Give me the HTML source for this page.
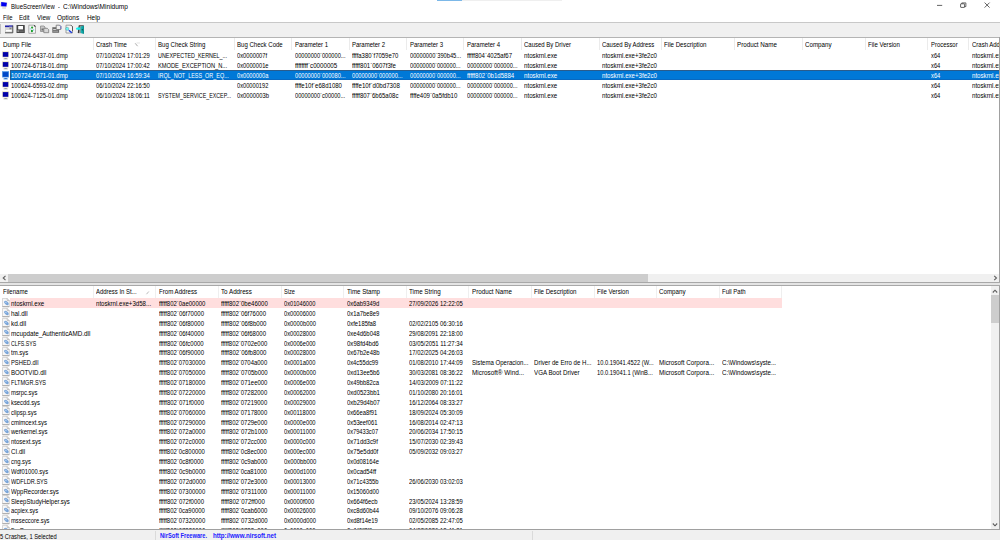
<!DOCTYPE html><html><head><meta charset="utf-8"><style>
*{margin:0;padding:0;box-sizing:border-box}
html,body{width:1000px;height:540px;overflow:hidden;background:#fff;font-family:"Liberation Sans", sans-serif;font-size:6.8px;color:#000}
.a{position:absolute;white-space:nowrap}
.t{position:absolute;white-space:nowrap}
.clip{position:absolute;overflow:hidden}
</style></head><body>
<div class="a" style="left:437px;top:0;width:125px;height:1px;background:#efefef"></div>
<div class="a" style="left:437px;top:0;width:25px;height:1px;background:#7cb8e8"></div>
<svg class="a" style="left:0;top:0" width="10" height="10" viewBox="0 0 10 10"><path d="M0.6 1.5L7.5 2.3L7.1 7.2L0.6 6.9Z" fill="#f2efe0"/><path d="M1.2 2L6.9 2.8L6.4 6.6L1.2 6.3Z" fill="#0000f0"/><path d="M0.3 3.5V6.5" stroke="#c0c0d0" stroke-width="0.6"/><rect x="2.2" y="7.2" width="3.8" height="1.5" fill="#dcdcd4"/></svg>
<div class="t" style="left:10.90px;top:0.94px;line-height:12px;font-size:6.8px;transform:scaleX(0.878378337773665);transform-origin:0 0;">BlueScreenView</div>
<div class="t" style="left:58.20px;top:0.94px;line-height:12px;font-size:6.8px;transform:scaleX(0.8);transform-origin:0 0;">-</div>
<div class="t" style="left:63.00px;top:0.94px;line-height:12px;font-size:6.8px;transform:scaleX(0.96);transform-origin:0 0;">C:\Windows\Minidump</div>
<svg class="a" style="left:930px;top:0" width="70" height="12" viewBox="0 0 70 12"><path d="M7 5.4H12.2" stroke="#303030" stroke-width="0.75"/><rect x="30.6" y="3.8" width="4" height="3.6" rx="0.4" fill="none" stroke="#303030" stroke-width="0.75"/><path d="M31.8 3.8V2.9H35.9V6.6H34.6" fill="none" stroke="#303030" stroke-width="0.7"/><path d="M54.6 2.6L59.6 7.6M59.6 2.6L54.6 7.6" stroke="#303030" stroke-width="0.75"/></svg>
<div class="t" style="left:2.80px;top:11.94px;line-height:12px;font-size:6.8px;transform:scaleX(0.8621238029852049);transform-origin:0 0;">File</div>
<div class="t" style="left:19.30px;top:11.94px;line-height:12px;font-size:6.8px;transform:scaleX(0.8989764197493093);transform-origin:0 0;">Edit</div>
<div class="t" style="left:36.70px;top:11.94px;line-height:12px;font-size:6.8px;transform:scaleX(0.9136285853747634);transform-origin:0 0;">View</div>
<div class="t" style="left:57.40px;top:11.94px;line-height:12px;font-size:6.8px;transform:scaleX(0.943141782059005);transform-origin:0 0;">Options</div>
<div class="t" style="left:86.60px;top:11.94px;line-height:12px;font-size:6.8px;transform:scaleX(0.9390283623174008);transform-origin:0 0;">Help</div>
<div class="a" style="left:0;top:22px;width:1000px;height:16px;background:#f0f0f0;border-top:1px solid #c8c8c8;border-bottom:1px solid #b4b4b4"></div>
<div class="a" style="left:0;top:24px;width:1px;height:10px;background:#c0c0c0"></div>
<svg class="a" style="left:0;top:0" width="100" height="40" viewBox="0 0 100 40">
<!-- icon1 window -->
<rect x="5" y="25.5" width="7.8" height="7.3" fill="#d4d4d4"/>
<rect x="5" y="25.5" width="7.8" height="1.6" fill="#2020a8"/>
<rect x="9" y="25.5" width="3.8" height="1.6" fill="#5858c0"/>
<rect x="6" y="30" width="5.6" height="1.5" fill="#ffffff"/>
<rect x="9.5" y="27.8" width="2" height="1.5" fill="#808080"/>
<path d="M5 32.8H12.8V25.5" fill="none" stroke="#404040" stroke-width="0.9"/>
<!-- icon2 floppy -->
<rect x="16.5" y="25" width="8.3" height="8" rx="0.6" fill="#484848"/>
<rect x="18.2" y="26" width="4.8" height="3.4" fill="#ffffff"/>
<rect x="17.3" y="30.3" width="2" height="1.6" fill="#9a9a9a"/>
<rect x="19.6" y="30.5" width="4.2" height="1.6" fill="#686868"/>
<!-- icon3 refresh doc -->
<path d="M28.8 25.2H34L35.5 26.7V33.3H28.8Z" fill="#f6f6f6" stroke="#9a9a9a" stroke-width="0.8"/>
<path d="M34.2 25.4L35.4 26.6" stroke="#2a2a2a" stroke-width="1.1"/>
<ellipse cx="32.1" cy="27.6" rx="1.1" ry="1.1" fill="#20a030"/>
<ellipse cx="31.9" cy="31" rx="1.1" ry="1.2" fill="#20a030"/>
<circle cx="30.3" cy="28.8" r="0.6" fill="#60c8e0"/>
<circle cx="33.6" cy="29.9" r="0.6" fill="#60c8e0"/>
<!-- icon4 copy -->
<path d="M40.5 26H44L45 27V31.5H40.5Z" fill="#c8c8c8" stroke="#8a8a8a" stroke-width="0.8"/>
<path d="M43.8 28.3H47.3L48.7 29.7V32.7H43.8Z" fill="#d8d8d8" stroke="#7a7a7a" stroke-width="0.8"/>
<rect x="41.5" y="28.5" width="2" height="2" fill="#707070"/>
<!-- icon5 properties -->
<rect x="52.3" y="27.2" width="6.8" height="5.6" fill="#6c6c6c"/>
<rect x="53.2" y="29" width="4.8" height="0.9" fill="#e0e0e0"/>
<rect x="53.2" y="30.8" width="4.8" height="0.8" fill="#b0b0b0"/>
<path d="M56.2 25.2H59.6L60.8 26.4V29.5H56.2Z" fill="#f0f0f0" stroke="#707070" stroke-width="0.8"/>
<path d="M59.8 25.3L60.9 26.5V29" fill="none" stroke="#6a6ac8" stroke-width="0.9"/>
<!-- icon6 find -->
<path d="M66 25.2H71L72.5 26.7V33H66Z" fill="#f6f6f6" stroke="#8a8a8a" stroke-width="0.8"/>
<path d="M71 25.2L72.5 26.7V31" fill="none" stroke="#505050" stroke-width="0.9"/>
<circle cx="67.2" cy="28.8" r="1.55" fill="#70f8f8" stroke="#4a9a9a" stroke-width="0.5"/>
<path d="M68.8 30.2L71.8 32.8" stroke="#1838e0" stroke-width="1.5"/>
<!-- icon7 exit -->
<path d="M79 25.2H83.8V33.2H78Z" fill="#9a9a9a"/>
<path d="M79.3 25.4L78.3 33" stroke="#383838" stroke-width="1.1"/>
<path d="M79 25.5H83.6" stroke="#585858" stroke-width="0.8"/>
<path d="M80.7 26.4L83.9 25.7V33.7L80.7 33Z" fill="#16b4b4"/>
<path d="M82.6 26.2L83.9 25.7V33.7L82.6 33.4Z" fill="#0a8c8c"/>
<circle cx="82.3" cy="29.7" r="0.7" fill="#0c4a4a"/>
<path d="M76 28.7C76 27.8 77.2 27.6 78.2 27.6H80.2V29.8H78.2C77.2 29.8 76 29.6 76 28.7Z" fill="#10f4f4"/>
</svg>
<div class="clip" style="left:0;top:38px;width:999px;height:236px">
<div class="t" style="left:3.30px;top:0.94px;line-height:12px;font-size:6.8px;transform:scaleX(0.911944823686074);transform-origin:0 0;">Dump File</div>
<div class="t" style="left:96.30px;top:0.94px;line-height:12px;font-size:6.8px;transform:scaleX(0.8877890320024007);transform-origin:0 0;">Crash Time</div>
<div class="t" style="left:158.30px;top:0.94px;line-height:12px;font-size:6.8px;transform:scaleX(0.8943401313452287);transform-origin:0 0;">Bug Check String</div>
<div class="t" style="left:237.30px;top:0.94px;line-height:12px;font-size:6.8px;transform:scaleX(0.8901181617749803);transform-origin:0 0;">Bug Check Code</div>
<div class="t" style="left:294.80px;top:0.94px;line-height:12px;font-size:6.8px;transform:scaleX(0.8853584732707671);transform-origin:0 0;">Parameter 1</div>
<div class="t" style="left:352.30px;top:0.94px;line-height:12px;font-size:6.8px;transform:scaleX(0.8853584732707671);transform-origin:0 0;">Parameter 2</div>
<div class="t" style="left:409.80px;top:0.94px;line-height:12px;font-size:6.8px;transform:scaleX(0.8853584732707671);transform-origin:0 0;">Parameter 3</div>
<div class="t" style="left:466.80px;top:0.94px;line-height:12px;font-size:6.8px;transform:scaleX(0.8853584732707671);transform-origin:0 0;">Parameter 4</div>
<div class="t" style="left:524.30px;top:0.94px;line-height:12px;font-size:6.8px;transform:scaleX(0.8816474991417802);transform-origin:0 0;">Caused By Driver</div>
<div class="t" style="left:602.30px;top:0.94px;line-height:12px;font-size:6.8px;transform:scaleX(0.8764581251211673);transform-origin:0 0;">Caused By Address</div>
<div class="t" style="left:664.30px;top:0.94px;line-height:12px;font-size:6.8px;transform:scaleX(0.9078690271016583);transform-origin:0 0;">File Description</div>
<div class="t" style="left:737.30px;top:0.94px;line-height:12px;font-size:6.8px;transform:scaleX(0.9180589476301896);transform-origin:0 0;">Product Name</div>
<div class="t" style="left:805.30px;top:0.94px;line-height:12px;font-size:6.8px;transform:scaleX(0.9140541369886487);transform-origin:0 0;">Company</div>
<div class="t" style="left:868.30px;top:0.94px;line-height:12px;font-size:6.8px;transform:scaleX(0.895371533684881);transform-origin:0 0;">File Version</div>
<div class="t" style="left:930.80px;top:0.94px;line-height:12px;font-size:6.8px;transform:scaleX(0.8694665146595884);transform-origin:0 0;">Processor</div>
<div class="t" style="left:971.80px;top:0.94px;line-height:12px;font-size:6.8px;transform:scaleX(0.8804827069410615);transform-origin:0 0;">Crash Address</div>
<div class="a" style="left:93px;top:0px;width:1px;height:12px;background:#ebebeb"></div>
<div class="a" style="left:155px;top:0px;width:1px;height:12px;background:#ebebeb"></div>
<div class="a" style="left:234px;top:0px;width:1px;height:12px;background:#ebebeb"></div>
<div class="a" style="left:291px;top:0px;width:1px;height:12px;background:#ebebeb"></div>
<div class="a" style="left:349px;top:0px;width:1px;height:12px;background:#ebebeb"></div>
<div class="a" style="left:406px;top:0px;width:1px;height:12px;background:#ebebeb"></div>
<div class="a" style="left:463px;top:0px;width:1px;height:12px;background:#ebebeb"></div>
<div class="a" style="left:521px;top:0px;width:1px;height:12px;background:#ebebeb"></div>
<div class="a" style="left:599px;top:0px;width:1px;height:12px;background:#ebebeb"></div>
<div class="a" style="left:661px;top:0px;width:1px;height:12px;background:#ebebeb"></div>
<div class="a" style="left:734px;top:0px;width:1px;height:12px;background:#ebebeb"></div>
<div class="a" style="left:802px;top:0px;width:1px;height:12px;background:#ebebeb"></div>
<div class="a" style="left:865px;top:0px;width:1px;height:12px;background:#ebebeb"></div>
<div class="a" style="left:927px;top:0px;width:1px;height:12px;background:#ebebeb"></div>
<div class="a" style="left:968px;top:0px;width:1px;height:12px;background:#ebebeb"></div>
<div class="a" style="left:1040px;top:0px;width:1px;height:12px;background:#ebebeb"></div>
<svg class="a" style="left:134px;top:4px" width="8" height="6" viewBox="0 0 8 6"><path d="M1.2 1.3L3.6 4.2" stroke="#a0a0a0" stroke-width="0.9"/><path d="M2.5 1H6" stroke="#d8d8d8" stroke-width="0.7"/></svg>
<div class="a" style="left:2.1px;top:13px"><svg width="8" height="9" viewBox="0 0 8 9"><rect x="0" y="0" width="7" height="6.5" fill="#efe9d2"/><rect x="0.8" y="1.1" width="5.5" height="4.7" fill="#0000a8"/><rect x="1.5" y="6.8" width="4.3" height="1.8" fill="#d4d4d4"/><rect x="2.5" y="7" width="2.3" height="0.8" fill="#909090"/></svg></div>
<div class="t" style="left:11.30px;top:11.94px;line-height:12px;font-size:6.8px;transform:scaleX(0.8754392397758873);transform-origin:0 0;">100724-6437-01.dmp</div>
<div class="t" style="left:96.30px;top:11.94px;line-height:12px;font-size:6.8px;transform:scaleX(0.8638601335223677);transform-origin:0 0;">07/10/2024 17:01:29</div>
<div class="t" style="left:158.30px;top:11.94px;line-height:12px;font-size:6.8px;transform:scaleX(0.7953793150907684);transform-origin:0 0;">UNEXPECTED_KERNEL_...</div>
<div class="t" style="left:237.30px;top:11.94px;line-height:12px;font-size:6.8px;transform:scaleX(0.8482992252812263);transform-origin:0 0;">0x0000007f</div>
<div class="t" style="left:294.80px;top:11.94px;line-height:12px;font-size:6.8px;transform:scaleX(0.8293531162696486);transform-origin:0 0;">00000000`000000...</div>
<div class="t" style="left:352.30px;top:11.94px;line-height:12px;font-size:6.8px;transform:scaleX(0.8757110905777983);transform-origin:0 0;">ffffa380`f7059e70</div>
<div class="t" style="left:409.80px;top:11.94px;line-height:12px;font-size:6.8px;transform:scaleX(0.837648599325955);transform-origin:0 0;">00000000`390b45...</div>
<div class="t" style="left:466.80px;top:11.94px;line-height:12px;font-size:6.8px;transform:scaleX(0.8841631338622237);transform-origin:0 0;">fffff804`4025af67</div>
<div class="t" style="left:524.30px;top:11.94px;line-height:12px;font-size:6.8px;transform:scaleX(0.9075430385405916);transform-origin:0 0;">ntoskrnl.exe</div>
<div class="t" style="left:602.30px;top:11.94px;line-height:12px;font-size:6.8px;transform:scaleX(0.9004073086796983);transform-origin:0 0;">ntoskrnl.exe+3fe2c0</div>
<div class="t" style="left:930.80px;top:11.94px;line-height:12px;font-size:6.8px;transform:scaleX(0.8486579527718925);transform-origin:0 0;">x64</div>
<div class="t" style="left:971.80px;top:11.94px;line-height:12px;font-size:6.8px;transform:scaleX(0.9004073086796983);transform-origin:0 0;">ntoskrnl.exe+3fe2c0</div>
<div class="a" style="left:2.1px;top:23px"><svg width="8" height="9" viewBox="0 0 8 9"><rect x="0" y="0" width="7" height="6.5" fill="#efe9d2"/><rect x="0.8" y="1.1" width="5.5" height="4.7" fill="#0000a8"/><rect x="1.5" y="6.8" width="4.3" height="1.8" fill="#d4d4d4"/><rect x="2.5" y="7" width="2.3" height="0.8" fill="#909090"/></svg></div>
<div class="t" style="left:11.30px;top:21.94px;line-height:12px;font-size:6.8px;transform:scaleX(0.8754392397758873);transform-origin:0 0;">100724-6718-01.dmp</div>
<div class="t" style="left:96.30px;top:21.94px;line-height:12px;font-size:6.8px;transform:scaleX(0.8638601335223677);transform-origin:0 0;">07/10/2024 17:00:42</div>
<div class="t" style="left:158.30px;top:21.94px;line-height:12px;font-size:6.8px;transform:scaleX(0.8384445779818045);transform-origin:0 0;">KMODE_EXCEPTION_N...</div>
<div class="t" style="left:237.30px;top:21.94px;line-height:12px;font-size:6.8px;transform:scaleX(0.841515983785663);transform-origin:0 0;">0x0000001e</div>
<div class="t" style="left:294.80px;top:21.94px;line-height:12px;font-size:6.8px;transform:scaleX(0.9114212762538939);transform-origin:0 0;">ffffffff`c0000005</div>
<div class="t" style="left:352.30px;top:21.94px;line-height:12px;font-size:6.8px;transform:scaleX(0.8957402927009628);transform-origin:0 0;">fffff801`0607f3fe</div>
<div class="t" style="left:409.80px;top:21.94px;line-height:12px;font-size:6.8px;transform:scaleX(0.8293531162696486);transform-origin:0 0;">00000000`000000...</div>
<div class="t" style="left:466.80px;top:21.94px;line-height:12px;font-size:6.8px;transform:scaleX(0.8293531162696486);transform-origin:0 0;">00000000`000000...</div>
<div class="t" style="left:524.30px;top:21.94px;line-height:12px;font-size:6.8px;transform:scaleX(0.9075430385405916);transform-origin:0 0;">ntoskrnl.exe</div>
<div class="t" style="left:602.30px;top:21.94px;line-height:12px;font-size:6.8px;transform:scaleX(0.9004073086796983);transform-origin:0 0;">ntoskrnl.exe+3fe2c0</div>
<div class="t" style="left:930.80px;top:21.94px;line-height:12px;font-size:6.8px;transform:scaleX(0.8486579527718925);transform-origin:0 0;">x64</div>
<div class="t" style="left:971.80px;top:21.94px;line-height:12px;font-size:6.8px;transform:scaleX(0.9004073086796983);transform-origin:0 0;">ntoskrnl.exe+3fe2c0</div>
<div class="a" style="left:10px;top:32px;width:989px;height:10px;background:#0078d7;border-top:1px solid #2a5c8c;border-left:1px solid #2a5c8c;border-bottom:1px solid #0868c0"></div>
<div class="a" style="left:2.1px;top:33px"><svg width="8" height="9" viewBox="0 0 8 9"><rect x="0" y="0" width="7" height="6.5" fill="#6aa8e8"/><rect x="0.8" y="1.1" width="5.5" height="4.7" fill="#0048c8"/><rect x="1.5" y="6.8" width="4.3" height="1.8" fill="#80b8f0"/><rect x="2.5" y="7" width="2.3" height="0.8" fill="#2060c0"/></svg></div>
<div class="t" style="left:11.30px;top:31.94px;line-height:12px;font-size:6.8px;transform:scaleX(0.8754392397758873);transform-origin:0 0;color:#fff;">100724-6671-01.dmp</div>
<div class="t" style="left:96.30px;top:31.94px;line-height:12px;font-size:6.8px;transform:scaleX(0.8638601335223677);transform-origin:0 0;color:#fff;">07/10/2024 16:59:34</div>
<div class="t" style="left:158.30px;top:31.94px;line-height:12px;font-size:6.8px;transform:scaleX(0.7994281196511119);transform-origin:0 0;color:#fff;">IRQL_NOT_LESS_OR_EQ...</div>
<div class="t" style="left:237.30px;top:31.94px;line-height:12px;font-size:6.8px;transform:scaleX(0.8385833076530551);transform-origin:0 0;color:#fff;">0x0000000a</div>
<div class="t" style="left:294.80px;top:31.94px;line-height:12px;font-size:6.8px;transform:scaleX(0.8293531162696486);transform-origin:0 0;color:#fff;">00000000`000080...</div>
<div class="t" style="left:352.30px;top:31.94px;line-height:12px;font-size:6.8px;transform:scaleX(0.8293531162696486);transform-origin:0 0;color:#fff;">00000000`000000...</div>
<div class="t" style="left:409.80px;top:31.94px;line-height:12px;font-size:6.8px;transform:scaleX(0.8293531162696486);transform-origin:0 0;color:#fff;">00000000`000000...</div>
<div class="t" style="left:466.80px;top:31.94px;line-height:12px;font-size:6.8px;transform:scaleX(0.8938972839106634);transform-origin:0 0;color:#fff;">fffff802`0b1d5884</div>
<div class="t" style="left:524.30px;top:31.94px;line-height:12px;font-size:6.8px;transform:scaleX(0.9075430385405916);transform-origin:0 0;color:#fff;">ntoskrnl.exe</div>
<div class="t" style="left:602.30px;top:31.94px;line-height:12px;font-size:6.8px;transform:scaleX(0.9004073086796983);transform-origin:0 0;color:#fff;">ntoskrnl.exe+3fe2c0</div>
<div class="t" style="left:930.80px;top:31.94px;line-height:12px;font-size:6.8px;transform:scaleX(0.8486579527718925);transform-origin:0 0;color:#fff;">x64</div>
<div class="t" style="left:971.80px;top:31.94px;line-height:12px;font-size:6.8px;transform:scaleX(0.9004073086796983);transform-origin:0 0;color:#fff;">ntoskrnl.exe+3fe2c0</div>
<div class="a" style="left:2.1px;top:43px"><svg width="8" height="9" viewBox="0 0 8 9"><rect x="0" y="0" width="7" height="6.5" fill="#efe9d2"/><rect x="0.8" y="1.1" width="5.5" height="4.7" fill="#0000a8"/><rect x="1.5" y="6.8" width="4.3" height="1.8" fill="#d4d4d4"/><rect x="2.5" y="7" width="2.3" height="0.8" fill="#909090"/></svg></div>
<div class="t" style="left:11.30px;top:41.94px;line-height:12px;font-size:6.8px;transform:scaleX(0.8754392397758873);transform-origin:0 0;">100624-6593-02.dmp</div>
<div class="t" style="left:96.30px;top:41.94px;line-height:12px;font-size:6.8px;transform:scaleX(0.8638601335223677);transform-origin:0 0;">06/10/2024 22:16:50</div>
<div class="t" style="left:237.30px;top:41.94px;line-height:12px;font-size:6.8px;transform:scaleX(0.8380339521572089);transform-origin:0 0;">0x00000192</div>
<div class="t" style="left:294.80px;top:41.94px;line-height:12px;font-size:6.8px;transform:scaleX(0.8872157474754947);transform-origin:0 0;">ffffe10f`e68d1080</div>
<div class="t" style="left:352.30px;top:41.94px;line-height:12px;font-size:6.8px;transform:scaleX(0.9038315110885929);transform-origin:0 0;">ffffe10f`d0bd7308</div>
<div class="t" style="left:409.80px;top:41.94px;line-height:12px;font-size:6.8px;transform:scaleX(0.8293531162696486);transform-origin:0 0;">00000000`000000...</div>
<div class="t" style="left:466.80px;top:41.94px;line-height:12px;font-size:6.8px;transform:scaleX(0.8293531162696486);transform-origin:0 0;">00000000`000000...</div>
<div class="t" style="left:524.30px;top:41.94px;line-height:12px;font-size:6.8px;transform:scaleX(0.9075430385405916);transform-origin:0 0;">ntoskrnl.exe</div>
<div class="t" style="left:602.30px;top:41.94px;line-height:12px;font-size:6.8px;transform:scaleX(0.9004073086796983);transform-origin:0 0;">ntoskrnl.exe+3fe2c0</div>
<div class="t" style="left:930.80px;top:41.94px;line-height:12px;font-size:6.8px;transform:scaleX(0.8486579527718925);transform-origin:0 0;">x64</div>
<div class="t" style="left:971.80px;top:41.94px;line-height:12px;font-size:6.8px;transform:scaleX(0.9004073086796983);transform-origin:0 0;">ntoskrnl.exe+3fe2c0</div>
<div class="a" style="left:2.1px;top:53px"><svg width="8" height="9" viewBox="0 0 8 9"><rect x="0" y="0" width="7" height="6.5" fill="#efe9d2"/><rect x="0.8" y="1.1" width="5.5" height="4.7" fill="#0000a8"/><rect x="1.5" y="6.8" width="4.3" height="1.8" fill="#d4d4d4"/><rect x="2.5" y="7" width="2.3" height="0.8" fill="#909090"/></svg></div>
<div class="t" style="left:11.30px;top:51.94px;line-height:12px;font-size:6.8px;transform:scaleX(0.8754392397758873);transform-origin:0 0;">100624-7125-01.dmp</div>
<div class="t" style="left:96.30px;top:51.94px;line-height:12px;font-size:6.8px;transform:scaleX(0.8708841583416904);transform-origin:0 0;">06/10/2024 18:06:11</div>
<div class="t" style="left:158.30px;top:51.94px;line-height:12px;font-size:6.8px;transform:scaleX(0.7843820963186192);transform-origin:0 0;">SYSTEM_SERVICE_EXCEP...</div>
<div class="t" style="left:237.30px;top:51.94px;line-height:12px;font-size:6.8px;transform:scaleX(0.8515252255092728);transform-origin:0 0;">0x0000003b</div>
<div class="t" style="left:294.80px;top:51.94px;line-height:12px;font-size:6.8px;transform:scaleX(0.8295515328362514);transform-origin:0 0;">00000000`c00000...</div>
<div class="t" style="left:352.30px;top:51.94px;line-height:12px;font-size:6.8px;transform:scaleX(0.885580205499828);transform-origin:0 0;">fffff807`6b65a08c</div>
<div class="t" style="left:409.80px;top:51.94px;line-height:12px;font-size:6.8px;transform:scaleX(0.894788783822882);transform-origin:0 0;">ffffe409`0a5fdb10</div>
<div class="t" style="left:466.80px;top:51.94px;line-height:12px;font-size:6.8px;transform:scaleX(0.8293531162696486);transform-origin:0 0;">00000000`000000...</div>
<div class="t" style="left:524.30px;top:51.94px;line-height:12px;font-size:6.8px;transform:scaleX(0.9075430385405916);transform-origin:0 0;">ntoskrnl.exe</div>
<div class="t" style="left:602.30px;top:51.94px;line-height:12px;font-size:6.8px;transform:scaleX(0.9004073086796983);transform-origin:0 0;">ntoskrnl.exe+3fe2c0</div>
<div class="t" style="left:930.80px;top:51.94px;line-height:12px;font-size:6.8px;transform:scaleX(0.8486579527718925);transform-origin:0 0;">x64</div>
<div class="t" style="left:971.80px;top:51.94px;line-height:12px;font-size:6.8px;transform:scaleX(0.9004073086796983);transform-origin:0 0;">ntoskrnl.exe+3fe2c0</div>
</div>
<div class="a" style="left:999px;top:37px;width:1px;height:245px;background:#a0a0a0"></div>
<div class="a" style="left:0;top:274px;width:999px;height:8px;background:#f0f0f0"></div>
<div class="a" style="left:8px;top:274px;width:640px;height:8px;background:#cdcdcd"></div>
<div class="a" style="left:2px;top:275px"><svg width="5" height="6" viewBox="0 0 5 6"><path d="M3.5 0.8L1.2 3L3.5 5.2" fill="none" stroke="#606060" stroke-width="1.1"/></svg></div>
<div class="a" style="left:993px;top:275px"><svg width="5" height="6" viewBox="0 0 5 6"><path d="M1.2 0.8L3.5 3L1.2 5.2" fill="none" stroke="#606060" stroke-width="1.1"/></svg></div>
<div class="a" style="left:0;top:282px;width:1000px;height:4px;background:#e4e4e4;border-top:1px solid #a8a8a8;border-bottom:1px solid #a8a8a8"></div>
<div class="clip" style="left:0;top:286px;width:991px;height:243px">
<div class="t" style="left:3.30px;top:-0.06px;line-height:12px;font-size:6.8px;transform:scaleX(0.8880112898635106);transform-origin:0 0;">Filename</div>
<div class="t" style="left:96.30px;top:-0.06px;line-height:12px;font-size:6.8px;transform:scaleX(0.8742317147371367);transform-origin:0 0;">Address In St...</div>
<div class="t" style="left:158.80px;top:-0.06px;line-height:12px;font-size:6.8px;transform:scaleX(0.8978720002309947);transform-origin:0 0;">From Address</div>
<div class="t" style="left:221.30px;top:-0.06px;line-height:12px;font-size:6.8px;transform:scaleX(0.9168695533400065);transform-origin:0 0;">To Address</div>
<div class="t" style="left:284.30px;top:-0.06px;line-height:12px;font-size:6.8px;transform:scaleX(0.8303187456795805);transform-origin:0 0;">Size</div>
<div class="t" style="left:346.80px;top:-0.06px;line-height:12px;font-size:6.8px;transform:scaleX(0.9060673488935306);transform-origin:0 0;">Time Stamp</div>
<div class="t" style="left:409.30px;top:-0.06px;line-height:12px;font-size:6.8px;transform:scaleX(0.9158038750539501);transform-origin:0 0;">Time String</div>
<div class="t" style="left:471.80px;top:-0.06px;line-height:12px;font-size:6.8px;transform:scaleX(0.9180589476301896);transform-origin:0 0;">Product Name</div>
<div class="t" style="left:534.30px;top:-0.06px;line-height:12px;font-size:6.8px;transform:scaleX(0.9078690271016583);transform-origin:0 0;">File Description</div>
<div class="t" style="left:597.30px;top:-0.06px;line-height:12px;font-size:6.8px;transform:scaleX(0.895371533684881);transform-origin:0 0;">File Version</div>
<div class="t" style="left:659.30px;top:-0.06px;line-height:12px;font-size:6.8px;transform:scaleX(0.9140541369886487);transform-origin:0 0;">Company</div>
<div class="t" style="left:722.30px;top:-0.06px;line-height:12px;font-size:6.8px;transform:scaleX(0.8825936955831482);transform-origin:0 0;">Full Path</div>
<div class="a" style="left:93px;top:0px;width:1px;height:12px;background:#efefef"></div>
<div class="a" style="left:155px;top:0px;width:1px;height:12px;background:#efefef"></div>
<div class="a" style="left:218px;top:0px;width:1px;height:12px;background:#efefef"></div>
<div class="a" style="left:281px;top:0px;width:1px;height:12px;background:#efefef"></div>
<div class="a" style="left:343px;top:0px;width:1px;height:12px;background:#efefef"></div>
<div class="a" style="left:406px;top:0px;width:1px;height:12px;background:#efefef"></div>
<div class="a" style="left:468px;top:0px;width:1px;height:12px;background:#efefef"></div>
<div class="a" style="left:531px;top:0px;width:1px;height:12px;background:#efefef"></div>
<div class="a" style="left:594px;top:0px;width:1px;height:12px;background:#efefef"></div>
<div class="a" style="left:656px;top:0px;width:1px;height:12px;background:#efefef"></div>
<div class="a" style="left:719px;top:0px;width:1px;height:12px;background:#efefef"></div>
<div class="a" style="left:781px;top:0px;width:1px;height:12px;background:#efefef"></div>
<svg class="a" style="left:145px;top:4px" width="6" height="6" viewBox="0 0 6 6"><path d="M1.5 4.2L3.8 1.5" stroke="#a8a8a8" stroke-width="0.8"/></svg>
<div class="a" style="left:10px;top:12.0px;width:771.5px;height:10px;background:#ffdede"></div>
<div class="a" style="left:2px;top:11.80px"><svg width="8" height="10" viewBox="0 0 8 10"><path d="M0.4 0.4H5.2L7.3 2.5V8.7H0.4Z" fill="#f7f7f7" stroke="#c4c4c4" stroke-width="0.7"/><path d="M5.2 0.4V2.5H7.3" fill="none" stroke="#a8a8a8" stroke-width="0.6"/><path d="M0.4 8.7H7.3" stroke="#9a9a9a" stroke-width="0.8"/><ellipse cx="4.4" cy="5" rx="2.7" ry="1.6" transform="rotate(40 4.4 5)" fill="#78a4d8"/><ellipse cx="3.9" cy="4.5" rx="1" ry="0.6" transform="rotate(40 3.9 4.5)" fill="#b4d0f0"/></svg></div>
<div class="t" style="left:11.30px;top:11.94px;line-height:12px;font-size:6.8px;transform:scaleX(0.9075430385405916);transform-origin:0 0;">ntoskrnl.exe</div>
<div class="t" style="left:96.30px;top:11.94px;line-height:12px;font-size:6.8px;transform:scaleX(0.8969557663231764);transform-origin:0 0;">ntoskrnl.exe+3d58...</div>
<div class="t" style="left:158.80px;top:11.94px;line-height:12px;font-size:6.8px;transform:scaleX(0.8777402872346468);transform-origin:0 0;">fffff802`0ae00000</div>
<div class="t" style="left:221.30px;top:11.94px;line-height:12px;font-size:6.8px;transform:scaleX(0.8868039682968024);transform-origin:0 0;">fffff802`0be46000</div>
<div class="t" style="left:284.30px;top:11.94px;line-height:12px;font-size:6.8px;transform:scaleX(0.8380339521572089);transform-origin:0 0;">0x01046000</div>
<div class="t" style="left:346.80px;top:11.94px;line-height:12px;font-size:6.8px;transform:scaleX(0.8657181855665655);transform-origin:0 0;">0x6ab9349d</div>
<div class="t" style="left:409.30px;top:11.94px;line-height:12px;font-size:6.8px;transform:scaleX(0.8638601335223677);transform-origin:0 0;">27/09/2026 12:22:05</div>
<div class="a" style="left:2px;top:21.68px"><svg width="8" height="10" viewBox="0 0 8 10"><path d="M0.4 0.4H5.2L7.3 2.5V8.7H0.4Z" fill="#f7f7f7" stroke="#c4c4c4" stroke-width="0.7"/><path d="M5.2 0.4V2.5H7.3" fill="none" stroke="#a8a8a8" stroke-width="0.6"/><path d="M0.4 8.7H7.3" stroke="#9a9a9a" stroke-width="0.8"/><ellipse cx="4.4" cy="5" rx="2.7" ry="1.6" transform="rotate(40 4.4 5)" fill="#78a4d8"/><ellipse cx="3.9" cy="4.5" rx="1" ry="0.6" transform="rotate(40 3.9 4.5)" fill="#b4d0f0"/></svg></div>
<div class="t" style="left:11.30px;top:21.94px;line-height:12px;font-size:6.8px;transform:scaleX(0.9318497771204418);transform-origin:0 0;">hal.dll</div>
<div class="t" style="left:158.80px;top:21.94px;line-height:12px;font-size:6.8px;transform:scaleX(0.8836473393219265);transform-origin:0 0;">fffff802`06f70000</div>
<div class="t" style="left:221.30px;top:21.94px;line-height:12px;font-size:6.8px;transform:scaleX(0.8836473393219265);transform-origin:0 0;">fffff802`06f76000</div>
<div class="t" style="left:284.30px;top:21.94px;line-height:12px;font-size:6.8px;transform:scaleX(0.8380339521572089);transform-origin:0 0;">0x00006000</div>
<div class="t" style="left:346.80px;top:21.94px;line-height:12px;font-size:6.8px;transform:scaleX(0.8591909754714095);transform-origin:0 0;">0x1a7be8e9</div>
<div class="a" style="left:2px;top:31.56px"><svg width="8" height="10" viewBox="0 0 8 10"><path d="M0.4 0.4H5.2L7.3 2.5V8.7H0.4Z" fill="#f7f7f7" stroke="#c4c4c4" stroke-width="0.7"/><path d="M5.2 0.4V2.5H7.3" fill="none" stroke="#a8a8a8" stroke-width="0.6"/><path d="M0.4 8.7H7.3" stroke="#9a9a9a" stroke-width="0.8"/><ellipse cx="4.4" cy="5" rx="2.7" ry="1.6" transform="rotate(40 4.4 5)" fill="#78a4d8"/><ellipse cx="3.9" cy="4.5" rx="1" ry="0.6" transform="rotate(40 3.9 4.5)" fill="#b4d0f0"/></svg></div>
<div class="t" style="left:11.30px;top:31.94px;line-height:12px;font-size:6.8px;transform:scaleX(0.9497457187437344);transform-origin:0 0;">kd.dll</div>
<div class="t" style="left:158.80px;top:31.94px;line-height:12px;font-size:6.8px;transform:scaleX(0.8836473393219265);transform-origin:0 0;">fffff802`06f80000</div>
<div class="t" style="left:221.30px;top:31.94px;line-height:12px;font-size:6.8px;transform:scaleX(0.8935644791006836);transform-origin:0 0;">fffff802`06f8b000</div>
<div class="t" style="left:284.30px;top:31.94px;line-height:12px;font-size:6.8px;transform:scaleX(0.8515252255092728);transform-origin:0 0;">0x0000b000</div>
<div class="t" style="left:346.80px;top:31.94px;line-height:12px;font-size:6.8px;transform:scaleX(0.8650571349348458);transform-origin:0 0;">0xfe185fa8</div>
<div class="t" style="left:409.30px;top:31.94px;line-height:12px;font-size:6.8px;transform:scaleX(0.8638601335223677);transform-origin:0 0;">02/02/2105 06:30:16</div>
<div class="a" style="left:2px;top:41.44px"><svg width="8" height="10" viewBox="0 0 8 10"><path d="M0.4 0.4H5.2L7.3 2.5V8.7H0.4Z" fill="#f7f7f7" stroke="#c4c4c4" stroke-width="0.7"/><path d="M5.2 0.4V2.5H7.3" fill="none" stroke="#a8a8a8" stroke-width="0.6"/><path d="M0.4 8.7H7.3" stroke="#9a9a9a" stroke-width="0.8"/><ellipse cx="4.4" cy="5" rx="2.7" ry="1.6" transform="rotate(40 4.4 5)" fill="#78a4d8"/><ellipse cx="3.9" cy="4.5" rx="1" ry="0.6" transform="rotate(40 3.9 4.5)" fill="#b4d0f0"/></svg></div>
<div class="t" style="left:11.30px;top:41.94px;line-height:12px;font-size:6.8px;transform:scaleX(0.9256321084353409);transform-origin:0 0;">mcupdate_AuthenticAMD.dll</div>
<div class="t" style="left:158.80px;top:41.94px;line-height:12px;font-size:6.8px;transform:scaleX(0.8836473393219265);transform-origin:0 0;">fffff802`06f40000</div>
<div class="t" style="left:221.30px;top:41.94px;line-height:12px;font-size:6.8px;transform:scaleX(0.8836473393219265);transform-origin:0 0;">fffff802`06f68000</div>
<div class="t" style="left:284.30px;top:41.94px;line-height:12px;font-size:6.8px;transform:scaleX(0.8380339521572089);transform-origin:0 0;">0x00028000</div>
<div class="t" style="left:346.80px;top:41.94px;line-height:12px;font-size:6.8px;transform:scaleX(0.8684985304897904);transform-origin:0 0;">0xe4d6b048</div>
<div class="t" style="left:409.30px;top:41.94px;line-height:12px;font-size:6.8px;transform:scaleX(0.8638601335223677);transform-origin:0 0;">29/08/2091 22:18:00</div>
<div class="a" style="left:2px;top:51.32px"><svg width="8" height="10" viewBox="0 0 8 10"><path d="M0.4 0.4H5.2L7.3 2.5V8.7H0.4Z" fill="#f7f7f7" stroke="#c4c4c4" stroke-width="0.7"/><path d="M5.2 0.4V2.5H7.3" fill="none" stroke="#a8a8a8" stroke-width="0.6"/><path d="M0.4 8.7H7.3" stroke="#9a9a9a" stroke-width="0.8"/><ellipse cx="4.4" cy="5" rx="2.7" ry="1.6" transform="rotate(40 4.4 5)" fill="#78a4d8"/><ellipse cx="3.9" cy="4.5" rx="1" ry="0.6" transform="rotate(40 3.9 4.5)" fill="#b4d0f0"/></svg></div>
<div class="t" style="left:11.30px;top:51.94px;line-height:12px;font-size:6.8px;transform:scaleX(0.7634562347508413);transform-origin:0 0;">CLFS.SYS</div>
<div class="t" style="left:158.80px;top:51.94px;line-height:12px;font-size:6.8px;transform:scaleX(0.8842938869721341);transform-origin:0 0;">fffff802`06fc0000</div>
<div class="t" style="left:221.30px;top:51.94px;line-height:12px;font-size:6.8px;transform:scaleX(0.8772430182706552);transform-origin:0 0;">fffff802`0702e000</div>
<div class="t" style="left:284.30px;top:51.94px;line-height:12px;font-size:6.8px;transform:scaleX(0.841515983785663);transform-origin:0 0;">0x0006e000</div>
<div class="t" style="left:346.80px;top:51.94px;line-height:12px;font-size:6.8px;transform:scaleX(0.8912502445771695);transform-origin:0 0;">0x98fd4bd6</div>
<div class="t" style="left:409.30px;top:51.94px;line-height:12px;font-size:6.8px;transform:scaleX(0.8708841583416904);transform-origin:0 0;">03/05/2051 11:27:34</div>
<div class="a" style="left:2px;top:61.20px"><svg width="8" height="10" viewBox="0 0 8 10"><path d="M0.4 0.4H5.2L7.3 2.5V8.7H0.4Z" fill="#f7f7f7" stroke="#c4c4c4" stroke-width="0.7"/><path d="M5.2 0.4V2.5H7.3" fill="none" stroke="#a8a8a8" stroke-width="0.6"/><path d="M0.4 8.7H7.3" stroke="#9a9a9a" stroke-width="0.8"/><ellipse cx="4.4" cy="5" rx="2.7" ry="1.6" transform="rotate(40 4.4 5)" fill="#78a4d8"/><ellipse cx="3.9" cy="4.5" rx="1" ry="0.6" transform="rotate(40 3.9 4.5)" fill="#b4d0f0"/></svg></div>
<div class="t" style="left:11.30px;top:60.94px;line-height:12px;font-size:6.8px;transform:scaleX(0.8799114085261983);transform-origin:0 0;">tm.sys</div>
<div class="t" style="left:158.80px;top:60.94px;line-height:12px;font-size:6.8px;transform:scaleX(0.8836473393219265);transform-origin:0 0;">fffff802`06f90000</div>
<div class="t" style="left:221.30px;top:60.94px;line-height:12px;font-size:6.8px;transform:scaleX(0.8935644791006836);transform-origin:0 0;">fffff802`06fb8000</div>
<div class="t" style="left:284.30px;top:60.94px;line-height:12px;font-size:6.8px;transform:scaleX(0.8380339521572089);transform-origin:0 0;">0x00028000</div>
<div class="t" style="left:346.80px;top:60.94px;line-height:12px;font-size:6.8px;transform:scaleX(0.8684985304897904);transform-origin:0 0;">0x67b2e48b</div>
<div class="t" style="left:409.30px;top:60.94px;line-height:12px;font-size:6.8px;transform:scaleX(0.8638601335223677);transform-origin:0 0;">17/02/2025 04:26:03</div>
<div class="a" style="left:2px;top:71.08px"><svg width="8" height="10" viewBox="0 0 8 10"><path d="M0.4 0.4H5.2L7.3 2.5V8.7H0.4Z" fill="#f7f7f7" stroke="#c4c4c4" stroke-width="0.7"/><path d="M5.2 0.4V2.5H7.3" fill="none" stroke="#a8a8a8" stroke-width="0.6"/><path d="M0.4 8.7H7.3" stroke="#9a9a9a" stroke-width="0.8"/><ellipse cx="4.4" cy="5" rx="2.7" ry="1.6" transform="rotate(40 4.4 5)" fill="#78a4d8"/><ellipse cx="3.9" cy="4.5" rx="1" ry="0.6" transform="rotate(40 3.9 4.5)" fill="#b4d0f0"/></svg></div>
<div class="t" style="left:11.30px;top:70.94px;line-height:12px;font-size:6.8px;transform:scaleX(0.8539713776869248);transform-origin:0 0;">PSHED.dll</div>
<div class="t" style="left:158.80px;top:70.94px;line-height:12px;font-size:6.8px;transform:scaleX(0.8747753838583691);transform-origin:0 0;">fffff802`07030000</div>
<div class="t" style="left:221.30px;top:70.94px;line-height:12px;font-size:6.8px;transform:scaleX(0.8752726528223606);transform-origin:0 0;">fffff802`0704a000</div>
<div class="t" style="left:284.30px;top:70.94px;line-height:12px;font-size:6.8px;transform:scaleX(0.838735638862438);transform-origin:0 0;">0x0001a000</div>
<div class="t" style="left:346.80px;top:70.94px;line-height:12px;font-size:6.8px;transform:scaleX(0.85264035634943);transform-origin:0 0;">0x4c55dc99</div>
<div class="t" style="left:409.30px;top:70.94px;line-height:12px;font-size:6.8px;transform:scaleX(0.8638601335223677);transform-origin:0 0;">01/08/2010 17:44:09</div>
<div class="t" style="left:471.80px;top:70.94px;line-height:12px;font-size:6.8px;transform:scaleX(0.8890883039829863);transform-origin:0 0;">Sistema Operacion...</div>
<div class="t" style="left:534.30px;top:70.94px;line-height:12px;font-size:6.8px;transform:scaleX(0.8954930861394303);transform-origin:0 0;">Driver de Erro de H...</div>
<div class="t" style="left:597.30px;top:70.94px;line-height:12px;font-size:6.8px;transform:scaleX(0.8450178191198676);transform-origin:0 0;">10.0.19041.4522 (W...</div>
<div class="t" style="left:659.30px;top:70.94px;line-height:12px;font-size:6.8px;transform:scaleX(0.9245228473944981);transform-origin:0 0;">Microsoft Corpora...</div>
<div class="t" style="left:722.30px;top:70.94px;line-height:12px;font-size:6.8px;transform:scaleX(0.905944705665641);transform-origin:0 0;">C:\Windows\syste...</div>
<div class="a" style="left:2px;top:80.96px"><svg width="8" height="10" viewBox="0 0 8 10"><path d="M0.4 0.4H5.2L7.3 2.5V8.7H0.4Z" fill="#f7f7f7" stroke="#c4c4c4" stroke-width="0.7"/><path d="M5.2 0.4V2.5H7.3" fill="none" stroke="#a8a8a8" stroke-width="0.6"/><path d="M0.4 8.7H7.3" stroke="#9a9a9a" stroke-width="0.8"/><ellipse cx="4.4" cy="5" rx="2.7" ry="1.6" transform="rotate(40 4.4 5)" fill="#78a4d8"/><ellipse cx="3.9" cy="4.5" rx="1" ry="0.6" transform="rotate(40 3.9 4.5)" fill="#b4d0f0"/></svg></div>
<div class="t" style="left:11.30px;top:80.94px;line-height:12px;font-size:6.8px;transform:scaleX(0.8993600098930414);transform-origin:0 0;">BOOTVID.dll</div>
<div class="t" style="left:158.80px;top:80.94px;line-height:12px;font-size:6.8px;transform:scaleX(0.8747753838583691);transform-origin:0 0;">fffff802`07050000</div>
<div class="t" style="left:221.30px;top:80.94px;line-height:12px;font-size:6.8px;transform:scaleX(0.8843363338845162);transform-origin:0 0;">fffff802`0705b000</div>
<div class="t" style="left:284.30px;top:80.94px;line-height:12px;font-size:6.8px;transform:scaleX(0.8515252255092728);transform-origin:0 0;">0x0000b000</div>
<div class="t" style="left:346.80px;top:80.94px;line-height:12px;font-size:6.8px;transform:scaleX(0.8719805621182443);transform-origin:0 0;">0xd13ee5b6</div>
<div class="t" style="left:409.30px;top:80.94px;line-height:12px;font-size:6.8px;transform:scaleX(0.8638601335223677);transform-origin:0 0;">30/03/2081 08:36:22</div>
<div class="t" style="left:471.80px;top:80.94px;line-height:12px;font-size:6.8px;transform:scaleX(0.936126503573157);transform-origin:0 0;">Microsoft® Wind...</div>
<div class="t" style="left:534.30px;top:80.94px;line-height:12px;font-size:6.8px;transform:scaleX(0.9124688265410078);transform-origin:0 0;">VGA Boot Driver</div>
<div class="t" style="left:597.30px;top:80.94px;line-height:12px;font-size:6.8px;transform:scaleX(0.847826874361315);transform-origin:0 0;">10.0.19041.1 (WinB...</div>
<div class="t" style="left:659.30px;top:80.94px;line-height:12px;font-size:6.8px;transform:scaleX(0.9245228473944981);transform-origin:0 0;">Microsoft Corpora...</div>
<div class="t" style="left:722.30px;top:80.94px;line-height:12px;font-size:6.8px;transform:scaleX(0.905944705665641);transform-origin:0 0;">C:\Windows\syste...</div>
<div class="a" style="left:2px;top:90.84px"><svg width="8" height="10" viewBox="0 0 8 10"><path d="M0.4 0.4H5.2L7.3 2.5V8.7H0.4Z" fill="#f7f7f7" stroke="#c4c4c4" stroke-width="0.7"/><path d="M5.2 0.4V2.5H7.3" fill="none" stroke="#a8a8a8" stroke-width="0.6"/><path d="M0.4 8.7H7.3" stroke="#9a9a9a" stroke-width="0.8"/><ellipse cx="4.4" cy="5" rx="2.7" ry="1.6" transform="rotate(40 4.4 5)" fill="#78a4d8"/><ellipse cx="3.9" cy="4.5" rx="1" ry="0.6" transform="rotate(40 3.9 4.5)" fill="#b4d0f0"/></svg></div>
<div class="t" style="left:11.30px;top:90.94px;line-height:12px;font-size:6.8px;transform:scaleX(0.816515359409998);transform-origin:0 0;">FLTMGR.SYS</div>
<div class="t" style="left:158.80px;top:90.94px;line-height:12px;font-size:6.8px;transform:scaleX(0.8747753838583691);transform-origin:0 0;">fffff802`07180000</div>
<div class="t" style="left:221.30px;top:90.94px;line-height:12px;font-size:6.8px;transform:scaleX(0.8797106526829415);transform-origin:0 0;">fffff802`071ee000</div>
<div class="t" style="left:284.30px;top:90.94px;line-height:12px;font-size:6.8px;transform:scaleX(0.841515983785663);transform-origin:0 0;">0x0006e000</div>
<div class="t" style="left:346.80px;top:90.94px;line-height:12px;font-size:6.8px;transform:scaleX(0.8662569081148455);transform-origin:0 0;">0x49bb82ca</div>
<div class="t" style="left:409.30px;top:90.94px;line-height:12px;font-size:6.8px;transform:scaleX(0.8708841583416904);transform-origin:0 0;">14/03/2009 07:11:22</div>
<div class="a" style="left:2px;top:100.72px"><svg width="8" height="10" viewBox="0 0 8 10"><path d="M0.4 0.4H5.2L7.3 2.5V8.7H0.4Z" fill="#f7f7f7" stroke="#c4c4c4" stroke-width="0.7"/><path d="M5.2 0.4V2.5H7.3" fill="none" stroke="#a8a8a8" stroke-width="0.6"/><path d="M0.4 8.7H7.3" stroke="#9a9a9a" stroke-width="0.8"/><ellipse cx="4.4" cy="5" rx="2.7" ry="1.6" transform="rotate(40 4.4 5)" fill="#78a4d8"/><ellipse cx="3.9" cy="4.5" rx="1" ry="0.6" transform="rotate(40 3.9 4.5)" fill="#b4d0f0"/></svg></div>
<div class="t" style="left:11.30px;top:100.94px;line-height:12px;font-size:6.8px;transform:scaleX(0.8643137027503313);transform-origin:0 0;">msrpc.sys</div>
<div class="t" style="left:158.80px;top:100.94px;line-height:12px;font-size:6.8px;transform:scaleX(0.8747753838583691);transform-origin:0 0;">fffff802`07220000</div>
<div class="t" style="left:221.30px;top:100.94px;line-height:12px;font-size:6.8px;transform:scaleX(0.8747753838583691);transform-origin:0 0;">fffff802`07282000</div>
<div class="t" style="left:284.30px;top:100.94px;line-height:12px;font-size:6.8px;transform:scaleX(0.8380339521572089);transform-origin:0 0;">0x00062000</div>
<div class="t" style="left:346.80px;top:100.94px;line-height:12px;font-size:6.8px;transform:scaleX(0.8785077722134003);transform-origin:0 0;">0xd0523bb1</div>
<div class="t" style="left:409.30px;top:100.94px;line-height:12px;font-size:6.8px;transform:scaleX(0.8638601335223677);transform-origin:0 0;">01/10/2080 20:16:01</div>
<div class="a" style="left:2px;top:110.60px"><svg width="8" height="10" viewBox="0 0 8 10"><path d="M0.4 0.4H5.2L7.3 2.5V8.7H0.4Z" fill="#f7f7f7" stroke="#c4c4c4" stroke-width="0.7"/><path d="M5.2 0.4V2.5H7.3" fill="none" stroke="#a8a8a8" stroke-width="0.6"/><path d="M0.4 8.7H7.3" stroke="#9a9a9a" stroke-width="0.8"/><ellipse cx="4.4" cy="5" rx="2.7" ry="1.6" transform="rotate(40 4.4 5)" fill="#78a4d8"/><ellipse cx="3.9" cy="4.5" rx="1" ry="0.6" transform="rotate(40 3.9 4.5)" fill="#b4d0f0"/></svg></div>
<div class="t" style="left:11.30px;top:110.94px;line-height:12px;font-size:6.8px;transform:scaleX(0.8608219673892826);transform-origin:0 0;">ksecdd.sys</div>
<div class="t" style="left:158.80px;top:110.94px;line-height:12px;font-size:6.8px;transform:scaleX(0.8836473393219265);transform-origin:0 0;">fffff802`071f0000</div>
<div class="t" style="left:221.30px;top:110.94px;line-height:12px;font-size:6.8px;transform:scaleX(0.8747753838583691);transform-origin:0 0;">fffff802`07219000</div>
<div class="t" style="left:284.30px;top:110.94px;line-height:12px;font-size:6.8px;transform:scaleX(0.8380339521572089);transform-origin:0 0;">0x00029000</div>
<div class="t" style="left:346.80px;top:110.94px;line-height:12px;font-size:6.8px;transform:scaleX(0.8785077722134003);transform-origin:0 0;">0xb29d4b07</div>
<div class="t" style="left:409.30px;top:110.94px;line-height:12px;font-size:6.8px;transform:scaleX(0.8638601335223677);transform-origin:0 0;">16/12/2064 08:33:27</div>
<div class="a" style="left:2px;top:120.48px"><svg width="8" height="10" viewBox="0 0 8 10"><path d="M0.4 0.4H5.2L7.3 2.5V8.7H0.4Z" fill="#f7f7f7" stroke="#c4c4c4" stroke-width="0.7"/><path d="M5.2 0.4V2.5H7.3" fill="none" stroke="#a8a8a8" stroke-width="0.6"/><path d="M0.4 8.7H7.3" stroke="#9a9a9a" stroke-width="0.8"/><ellipse cx="4.4" cy="5" rx="2.7" ry="1.6" transform="rotate(40 4.4 5)" fill="#78a4d8"/><ellipse cx="3.9" cy="4.5" rx="1" ry="0.6" transform="rotate(40 3.9 4.5)" fill="#b4d0f0"/></svg></div>
<div class="t" style="left:11.30px;top:120.94px;line-height:12px;font-size:6.8px;transform:scaleX(0.8689641566412654);transform-origin:0 0;">clipsp.sys</div>
<div class="t" style="left:158.80px;top:120.94px;line-height:12px;font-size:6.8px;transform:scaleX(0.8747753838583691);transform-origin:0 0;">fffff802`07060000</div>
<div class="t" style="left:221.30px;top:120.94px;line-height:12px;font-size:6.8px;transform:scaleX(0.8747753838583691);transform-origin:0 0;">fffff802`07178000</div>
<div class="t" style="left:284.30px;top:120.94px;line-height:12px;font-size:6.8px;transform:scaleX(0.8494525698076661);transform-origin:0 0;">0x00118000</div>
<div class="t" style="left:346.80px;top:120.94px;line-height:12px;font-size:6.8px;transform:scaleX(0.8530300398742026);transform-origin:0 0;">0x66ea8f91</div>
<div class="t" style="left:409.30px;top:120.94px;line-height:12px;font-size:6.8px;transform:scaleX(0.8638601335223677);transform-origin:0 0;">18/09/2024 05:30:09</div>
<div class="a" style="left:2px;top:130.36px"><svg width="8" height="10" viewBox="0 0 8 10"><path d="M0.4 0.4H5.2L7.3 2.5V8.7H0.4Z" fill="#f7f7f7" stroke="#c4c4c4" stroke-width="0.7"/><path d="M5.2 0.4V2.5H7.3" fill="none" stroke="#a8a8a8" stroke-width="0.6"/><path d="M0.4 8.7H7.3" stroke="#9a9a9a" stroke-width="0.8"/><ellipse cx="4.4" cy="5" rx="2.7" ry="1.6" transform="rotate(40 4.4 5)" fill="#78a4d8"/><ellipse cx="3.9" cy="4.5" rx="1" ry="0.6" transform="rotate(40 3.9 4.5)" fill="#b4d0f0"/></svg></div>
<div class="t" style="left:11.30px;top:130.94px;line-height:12px;font-size:6.8px;transform:scaleX(0.8837259243503849);transform-origin:0 0;">cmimcext.sys</div>
<div class="t" style="left:158.80px;top:130.94px;line-height:12px;font-size:6.8px;transform:scaleX(0.8747753838583691);transform-origin:0 0;">fffff802`07290000</div>
<div class="t" style="left:221.30px;top:130.94px;line-height:12px;font-size:6.8px;transform:scaleX(0.8772430182706552);transform-origin:0 0;">fffff802`0729e000</div>
<div class="t" style="left:284.30px;top:130.94px;line-height:12px;font-size:6.8px;transform:scaleX(0.841515983785663);transform-origin:0 0;">0x0000e000</div>
<div class="t" style="left:346.80px;top:130.94px;line-height:12px;font-size:6.8px;transform:scaleX(0.8559582585086685);transform-origin:0 0;">0x53eef061</div>
<div class="t" style="left:409.30px;top:130.94px;line-height:12px;font-size:6.8px;transform:scaleX(0.8638601335223677);transform-origin:0 0;">16/08/2014 02:47:13</div>
<div class="a" style="left:2px;top:140.24px"><svg width="8" height="10" viewBox="0 0 8 10"><path d="M0.4 0.4H5.2L7.3 2.5V8.7H0.4Z" fill="#f7f7f7" stroke="#c4c4c4" stroke-width="0.7"/><path d="M5.2 0.4V2.5H7.3" fill="none" stroke="#a8a8a8" stroke-width="0.6"/><path d="M0.4 8.7H7.3" stroke="#9a9a9a" stroke-width="0.8"/><ellipse cx="4.4" cy="5" rx="2.7" ry="1.6" transform="rotate(40 4.4 5)" fill="#78a4d8"/><ellipse cx="3.9" cy="4.5" rx="1" ry="0.6" transform="rotate(40 3.9 4.5)" fill="#b4d0f0"/></svg></div>
<div class="t" style="left:11.30px;top:139.94px;line-height:12px;font-size:6.8px;transform:scaleX(0.880336488223414);transform-origin:0 0;">werkernel.sys</div>
<div class="t" style="left:158.80px;top:139.94px;line-height:12px;font-size:6.8px;transform:scaleX(0.8752726528223606);transform-origin:0 0;">fffff802`072a0000</div>
<div class="t" style="left:221.30px;top:139.94px;line-height:12px;font-size:6.8px;transform:scaleX(0.8843363338845162);transform-origin:0 0;">fffff802`072b1000</div>
<div class="t" style="left:284.30px;top:139.94px;line-height:12px;font-size:6.8px;transform:scaleX(0.8494525698076661);transform-origin:0 0;">0x00011000</div>
<div class="t" style="left:346.80px;top:139.94px;line-height:12px;font-size:6.8px;transform:scaleX(0.8384471360446688);transform-origin:0 0;">0x79433c07</div>
<div class="t" style="left:409.30px;top:139.94px;line-height:12px;font-size:6.8px;transform:scaleX(0.8638601335223677);transform-origin:0 0;">20/06/2034 17:50:15</div>
<div class="a" style="left:2px;top:150.12px"><svg width="8" height="10" viewBox="0 0 8 10"><path d="M0.4 0.4H5.2L7.3 2.5V8.7H0.4Z" fill="#f7f7f7" stroke="#c4c4c4" stroke-width="0.7"/><path d="M5.2 0.4V2.5H7.3" fill="none" stroke="#a8a8a8" stroke-width="0.6"/><path d="M0.4 8.7H7.3" stroke="#9a9a9a" stroke-width="0.8"/><ellipse cx="4.4" cy="5" rx="2.7" ry="1.6" transform="rotate(40 4.4 5)" fill="#78a4d8"/><ellipse cx="3.9" cy="4.5" rx="1" ry="0.6" transform="rotate(40 3.9 4.5)" fill="#b4d0f0"/></svg></div>
<div class="t" style="left:11.30px;top:149.94px;line-height:12px;font-size:6.8px;transform:scaleX(0.8810845602625439);transform-origin:0 0;">ntosext.sys</div>
<div class="t" style="left:158.80px;top:149.94px;line-height:12px;font-size:6.8px;transform:scaleX(0.8754476357792473);transform-origin:0 0;">fffff802`072c0000</div>
<div class="t" style="left:221.30px;top:149.94px;line-height:12px;font-size:6.8px;transform:scaleX(0.8760154483573797);transform-origin:0 0;">fffff802`072cc000</div>
<div class="t" style="left:284.30px;top:149.94px;line-height:12px;font-size:6.8px;transform:scaleX(0.8384471360446688);transform-origin:0 0;">0x0000c000</div>
<div class="t" style="left:346.80px;top:149.94px;line-height:12px;font-size:6.8px;transform:scaleX(0.8775598504318032);transform-origin:0 0;">0x71dd3c9f</div>
<div class="t" style="left:409.30px;top:149.94px;line-height:12px;font-size:6.8px;transform:scaleX(0.8638601335223677);transform-origin:0 0;">15/07/2030 02:39:43</div>
<div class="a" style="left:2px;top:160.00px"><svg width="8" height="10" viewBox="0 0 8 10"><path d="M0.4 0.4H5.2L7.3 2.5V8.7H0.4Z" fill="#f7f7f7" stroke="#c4c4c4" stroke-width="0.7"/><path d="M5.2 0.4V2.5H7.3" fill="none" stroke="#a8a8a8" stroke-width="0.6"/><path d="M0.4 8.7H7.3" stroke="#9a9a9a" stroke-width="0.8"/><ellipse cx="4.4" cy="5" rx="2.7" ry="1.6" transform="rotate(40 4.4 5)" fill="#78a4d8"/><ellipse cx="3.9" cy="4.5" rx="1" ry="0.6" transform="rotate(40 3.9 4.5)" fill="#b4d0f0"/></svg></div>
<div class="t" style="left:11.30px;top:159.94px;line-height:12px;font-size:6.8px;transform:scaleX(0.9095510894342994);transform-origin:0 0;">CI.dll</div>
<div class="t" style="left:158.80px;top:159.94px;line-height:12px;font-size:6.8px;transform:scaleX(0.8754476357792473);transform-origin:0 0;">fffff802`0c800000</div>
<div class="t" style="left:221.30px;top:159.94px;line-height:12px;font-size:6.8px;transform:scaleX(0.8785195089863331);transform-origin:0 0;">fffff802`0c8ec000</div>
<div class="t" style="left:284.30px;top:159.94px;line-height:12px;font-size:6.8px;transform:scaleX(0.8419649529128354);transform-origin:0 0;">0x000ec000</div>
<div class="t" style="left:346.80px;top:159.94px;line-height:12px;font-size:6.8px;transform:scaleX(0.8803718020111672);transform-origin:0 0;">0x75e5dd0f</div>
<div class="t" style="left:409.30px;top:159.94px;line-height:12px;font-size:6.8px;transform:scaleX(0.8638601335223677);transform-origin:0 0;">05/09/2032 09:03:27</div>
<div class="a" style="left:2px;top:169.88px"><svg width="8" height="10" viewBox="0 0 8 10"><path d="M0.4 0.4H5.2L7.3 2.5V8.7H0.4Z" fill="#f7f7f7" stroke="#c4c4c4" stroke-width="0.7"/><path d="M5.2 0.4V2.5H7.3" fill="none" stroke="#a8a8a8" stroke-width="0.6"/><path d="M0.4 8.7H7.3" stroke="#9a9a9a" stroke-width="0.8"/><ellipse cx="4.4" cy="5" rx="2.7" ry="1.6" transform="rotate(40 4.4 5)" fill="#78a4d8"/><ellipse cx="3.9" cy="4.5" rx="1" ry="0.6" transform="rotate(40 3.9 4.5)" fill="#b4d0f0"/></svg></div>
<div class="t" style="left:11.30px;top:169.94px;line-height:12px;font-size:6.8px;transform:scaleX(0.8614560306545485);transform-origin:0 0;">cng.sys</div>
<div class="t" style="left:158.80px;top:169.94px;line-height:12px;font-size:6.8px;transform:scaleX(0.8842938869721341);transform-origin:0 0;">fffff802`0c8f0000</div>
<div class="t" style="left:221.30px;top:169.94px;line-height:12px;font-size:6.8px;transform:scaleX(0.885580205499828);transform-origin:0 0;">fffff802`0c9ab000</div>
<div class="t" style="left:284.30px;top:169.94px;line-height:12px;font-size:6.8px;transform:scaleX(0.8650164988613366);transform-origin:0 0;">0x000bb000</div>
<div class="t" style="left:346.80px;top:169.94px;line-height:12px;font-size:6.8px;transform:scaleX(0.8550072571377267);transform-origin:0 0;">0x0d08164e</div>
<div class="a" style="left:2px;top:179.76px"><svg width="8" height="10" viewBox="0 0 8 10"><path d="M0.4 0.4H5.2L7.3 2.5V8.7H0.4Z" fill="#f7f7f7" stroke="#c4c4c4" stroke-width="0.7"/><path d="M5.2 0.4V2.5H7.3" fill="none" stroke="#a8a8a8" stroke-width="0.6"/><path d="M0.4 8.7H7.3" stroke="#9a9a9a" stroke-width="0.8"/><ellipse cx="4.4" cy="5" rx="2.7" ry="1.6" transform="rotate(40 4.4 5)" fill="#78a4d8"/><ellipse cx="3.9" cy="4.5" rx="1" ry="0.6" transform="rotate(40 3.9 4.5)" fill="#b4d0f0"/></svg></div>
<div class="t" style="left:11.30px;top:179.94px;line-height:12px;font-size:6.8px;transform:scaleX(0.8620424260195407);transform-origin:0 0;">Wdf01000.sys</div>
<div class="t" style="left:158.80px;top:179.94px;line-height:12px;font-size:6.8px;transform:scaleX(0.885079260705082);transform-origin:0 0;">fffff802`0c9b0000</div>
<div class="t" style="left:221.30px;top:179.94px;line-height:12px;font-size:6.8px;transform:scaleX(0.8759485805739934);transform-origin:0 0;">fffff802`0ca81000</div>
<div class="t" style="left:284.30px;top:179.94px;line-height:12px;font-size:6.8px;transform:scaleX(0.8515252255092728);transform-origin:0 0;">0x000d1000</div>
<div class="t" style="left:346.80px;top:179.94px;line-height:12px;font-size:6.8px;transform:scaleX(0.8799651782167295);transform-origin:0 0;">0x0cad54ff</div>
<div class="a" style="left:2px;top:189.64px"><svg width="8" height="10" viewBox="0 0 8 10"><path d="M0.4 0.4H5.2L7.3 2.5V8.7H0.4Z" fill="#f7f7f7" stroke="#c4c4c4" stroke-width="0.7"/><path d="M5.2 0.4V2.5H7.3" fill="none" stroke="#a8a8a8" stroke-width="0.6"/><path d="M0.4 8.7H7.3" stroke="#9a9a9a" stroke-width="0.8"/><ellipse cx="4.4" cy="5" rx="2.7" ry="1.6" transform="rotate(40 4.4 5)" fill="#78a4d8"/><ellipse cx="3.9" cy="4.5" rx="1" ry="0.6" transform="rotate(40 3.9 4.5)" fill="#b4d0f0"/></svg></div>
<div class="t" style="left:11.30px;top:189.94px;line-height:12px;font-size:6.8px;transform:scaleX(0.8201853730880468);transform-origin:0 0;">WDFLDR.SYS</div>
<div class="t" style="left:158.80px;top:189.94px;line-height:12px;font-size:6.8px;transform:scaleX(0.8843363338845162);transform-origin:0 0;">fffff802`072d0000</div>
<div class="t" style="left:221.30px;top:189.94px;line-height:12px;font-size:6.8px;transform:scaleX(0.8772430182706552);transform-origin:0 0;">fffff802`072e3000</div>
<div class="t" style="left:284.30px;top:189.94px;line-height:12px;font-size:6.8px;transform:scaleX(0.8380339521572089);transform-origin:0 0;">0x00013000</div>
<div class="t" style="left:346.80px;top:189.94px;line-height:12px;font-size:6.8px;transform:scaleX(0.852077060765372);transform-origin:0 0;">0x71c4355b</div>
<div class="t" style="left:409.30px;top:189.94px;line-height:12px;font-size:6.8px;transform:scaleX(0.8638601335223677);transform-origin:0 0;">26/06/2030 03:02:03</div>
<div class="a" style="left:2px;top:199.52px"><svg width="8" height="10" viewBox="0 0 8 10"><path d="M0.4 0.4H5.2L7.3 2.5V8.7H0.4Z" fill="#f7f7f7" stroke="#c4c4c4" stroke-width="0.7"/><path d="M5.2 0.4V2.5H7.3" fill="none" stroke="#a8a8a8" stroke-width="0.6"/><path d="M0.4 8.7H7.3" stroke="#9a9a9a" stroke-width="0.8"/><ellipse cx="4.4" cy="5" rx="2.7" ry="1.6" transform="rotate(40 4.4 5)" fill="#78a4d8"/><ellipse cx="3.9" cy="4.5" rx="1" ry="0.6" transform="rotate(40 3.9 4.5)" fill="#b4d0f0"/></svg></div>
<div class="t" style="left:11.30px;top:199.94px;line-height:12px;font-size:6.8px;transform:scaleX(0.8920704096522084);transform-origin:0 0;">WppRecorder.sys</div>
<div class="t" style="left:158.80px;top:199.94px;line-height:12px;font-size:6.8px;transform:scaleX(0.8747753838583691);transform-origin:0 0;">fffff802`07300000</div>
<div class="t" style="left:221.30px;top:199.94px;line-height:12px;font-size:6.8px;transform:scaleX(0.883303676304668);transform-origin:0 0;">fffff802`07311000</div>
<div class="t" style="left:284.30px;top:199.94px;line-height:12px;font-size:6.8px;transform:scaleX(0.8494525698076661);transform-origin:0 0;">0x00011000</div>
<div class="t" style="left:346.80px;top:199.94px;line-height:12px;font-size:6.8px;transform:scaleX(0.8515252255092728);transform-origin:0 0;">0x15060d00</div>
<div class="a" style="left:2px;top:209.40px"><svg width="8" height="10" viewBox="0 0 8 10"><path d="M0.4 0.4H5.2L7.3 2.5V8.7H0.4Z" fill="#f7f7f7" stroke="#c4c4c4" stroke-width="0.7"/><path d="M5.2 0.4V2.5H7.3" fill="none" stroke="#a8a8a8" stroke-width="0.6"/><path d="M0.4 8.7H7.3" stroke="#9a9a9a" stroke-width="0.8"/><ellipse cx="4.4" cy="5" rx="2.7" ry="1.6" transform="rotate(40 4.4 5)" fill="#78a4d8"/><ellipse cx="3.9" cy="4.5" rx="1" ry="0.6" transform="rotate(40 3.9 4.5)" fill="#b4d0f0"/></svg></div>
<div class="t" style="left:11.30px;top:209.94px;line-height:12px;font-size:6.8px;transform:scaleX(0.8850760062547063);transform-origin:0 0;">SleepStudyHelper.sys</div>
<div class="t" style="left:158.80px;top:209.94px;line-height:12px;font-size:6.8px;transform:scaleX(0.8836473393219265);transform-origin:0 0;">fffff802`072f0000</div>
<div class="t" style="left:221.30px;top:209.94px;line-height:12px;font-size:6.8px;transform:scaleX(0.8953169284793554);transform-origin:0 0;">fffff802`072ff000</div>
<div class="t" style="left:284.30px;top:209.94px;line-height:12px;font-size:6.8px;transform:scaleX(0.84862380887613);transform-origin:0 0;">0x0000f000</div>
<div class="t" style="left:346.80px;top:209.94px;line-height:12px;font-size:6.8px;transform:scaleX(0.867243517809949);transform-origin:0 0;">0x664f6ecb</div>
<div class="t" style="left:409.30px;top:209.94px;line-height:12px;font-size:6.8px;transform:scaleX(0.8638601335223677);transform-origin:0 0;">23/05/2024 13:28:59</div>
<div class="a" style="left:2px;top:219.28px"><svg width="8" height="10" viewBox="0 0 8 10"><path d="M0.4 0.4H5.2L7.3 2.5V8.7H0.4Z" fill="#f7f7f7" stroke="#c4c4c4" stroke-width="0.7"/><path d="M5.2 0.4V2.5H7.3" fill="none" stroke="#a8a8a8" stroke-width="0.6"/><path d="M0.4 8.7H7.3" stroke="#9a9a9a" stroke-width="0.8"/><ellipse cx="4.4" cy="5" rx="2.7" ry="1.6" transform="rotate(40 4.4 5)" fill="#78a4d8"/><ellipse cx="3.9" cy="4.5" rx="1" ry="0.6" transform="rotate(40 3.9 4.5)" fill="#b4d0f0"/></svg></div>
<div class="t" style="left:11.30px;top:218.94px;line-height:12px;font-size:6.8px;transform:scaleX(0.8562531196508516);transform-origin:0 0;">acpiex.sys</div>
<div class="t" style="left:158.80px;top:218.94px;line-height:12px;font-size:6.8px;transform:scaleX(0.8759485805739934);transform-origin:0 0;">fffff802`0ca90000</div>
<div class="t" style="left:221.30px;top:218.94px;line-height:12px;font-size:6.8px;transform:scaleX(0.885580205499828);transform-origin:0 0;">fffff802`0cab6000</div>
<div class="t" style="left:284.30px;top:218.94px;line-height:12px;font-size:6.8px;transform:scaleX(0.8380339521572089);transform-origin:0 0;">0x00026000</div>
<div class="t" style="left:346.80px;top:218.94px;line-height:12px;font-size:6.8px;transform:scaleX(0.865706985486075);transform-origin:0 0;">0xc8d60b44</div>
<div class="t" style="left:409.30px;top:218.94px;line-height:12px;font-size:6.8px;transform:scaleX(0.8638601335223677);transform-origin:0 0;">09/10/2076 09:06:28</div>
<div class="a" style="left:2px;top:229.16px"><svg width="8" height="10" viewBox="0 0 8 10"><path d="M0.4 0.4H5.2L7.3 2.5V8.7H0.4Z" fill="#f7f7f7" stroke="#c4c4c4" stroke-width="0.7"/><path d="M5.2 0.4V2.5H7.3" fill="none" stroke="#a8a8a8" stroke-width="0.6"/><path d="M0.4 8.7H7.3" stroke="#9a9a9a" stroke-width="0.8"/><ellipse cx="4.4" cy="5" rx="2.7" ry="1.6" transform="rotate(40 4.4 5)" fill="#78a4d8"/><ellipse cx="3.9" cy="4.5" rx="1" ry="0.6" transform="rotate(40 3.9 4.5)" fill="#b4d0f0"/></svg></div>
<div class="t" style="left:11.30px;top:228.94px;line-height:12px;font-size:6.8px;transform:scaleX(0.8561628170923454);transform-origin:0 0;">msseccore.sys</div>
<div class="t" style="left:158.80px;top:228.94px;line-height:12px;font-size:6.8px;transform:scaleX(0.8747753838583691);transform-origin:0 0;">fffff802`07320000</div>
<div class="t" style="left:221.30px;top:228.94px;line-height:12px;font-size:6.8px;transform:scaleX(0.8843363338845162);transform-origin:0 0;">fffff802`0732d000</div>
<div class="t" style="left:284.30px;top:228.94px;line-height:12px;font-size:6.8px;transform:scaleX(0.8515252255092728);transform-origin:0 0;">0x0000d000</div>
<div class="t" style="left:346.80px;top:228.94px;line-height:12px;font-size:6.8px;transform:scaleX(0.8664998455927458);transform-origin:0 0;">0xd8f14e19</div>
<div class="t" style="left:409.30px;top:228.94px;line-height:12px;font-size:6.8px;transform:scaleX(0.8638601335223677);transform-origin:0 0;">02/05/2085 22:47:05</div>
<div class="a" style="left:2px;top:239.04px"><svg width="8" height="10" viewBox="0 0 8 10"><path d="M0.4 0.4H5.2L7.3 2.5V8.7H0.4Z" fill="#f7f7f7" stroke="#c4c4c4" stroke-width="0.7"/><path d="M5.2 0.4V2.5H7.3" fill="none" stroke="#a8a8a8" stroke-width="0.6"/><path d="M0.4 8.7H7.3" stroke="#9a9a9a" stroke-width="0.8"/><ellipse cx="4.4" cy="5" rx="2.7" ry="1.6" transform="rotate(40 4.4 5)" fill="#78a4d8"/><ellipse cx="3.9" cy="4.5" rx="1" ry="0.6" transform="rotate(40 3.9 4.5)" fill="#b4d0f0"/></svg></div>
<div class="t" style="left:11.30px;top:238.94px;line-height:12px;font-size:6.8px;transform:scaleX(0.7844405930597905);transform-origin:0 0;">Fs_Rec.sys</div>
<div class="t" style="left:158.80px;top:238.94px;line-height:12px;font-size:6.8px;transform:scaleX(0.8747753838583691);transform-origin:0 0;">fffff802`07330000</div>
<div class="t" style="left:221.30px;top:238.94px;line-height:12px;font-size:6.8px;transform:scaleX(0.8752726528223606);transform-origin:0 0;">fffff802`0733a000</div>
<div class="t" style="left:284.30px;top:238.94px;line-height:12px;font-size:6.8px;transform:scaleX(0.838735638862438);transform-origin:0 0;">0x0000a000</div>
<div class="t" style="left:346.80px;top:238.94px;line-height:12px;font-size:6.8px;transform:scaleX(0.9092741965955488);transform-origin:0 0;">0x1f0f7ffb</div>
<div class="t" style="left:409.30px;top:238.94px;line-height:12px;font-size:6.8px;transform:scaleX(0.8638601335223677);transform-origin:0 0;">04/07/1986 12:41:31</div>
</div>
<div class="a" style="left:991px;top:286px;width:8px;height:243px;background:#f0f0f0"></div>
<div class="a" style="left:991px;top:294.5px;width:8px;height:28.5px;background:#cdcdcd"></div>
<div class="a" style="left:992px;top:288px"><svg width="6" height="5" viewBox="0 0 6 5"><path d="M0.8 3.5L3 1.2L5.2 3.5" fill="none" stroke="#606060" stroke-width="1.1"/></svg></div>
<div class="a" style="left:992px;top:521px"><svg width="6" height="5" viewBox="0 0 6 5"><path d="M0.8 1.5L3 3.8L5.2 1.5" fill="none" stroke="#606060" stroke-width="1.1"/></svg></div>
<div class="a" style="left:999px;top:286px;width:1px;height:243px;background:#a0a0a0"></div>
<div class="a" style="left:0;top:529px;width:1000px;height:11px;background:#f0f0f0;border-top:1px solid #a0a0a0"></div>
<div class="t" style="left:0.00px;top:530.94px;line-height:12px;font-size:6.8px;transform:scaleX(0.847);transform-origin:0 0;">5 Crashes, 1 Selected</div>
<div class="a" style="left:155px;top:531px;width:1px;height:9px;background:#dadada"></div>
<div class="a" style="left:532px;top:531px;width:1px;height:9px;background:#dadada"></div>
<div class="t" style="left:159.80px;top:529.94px;line-height:12px;font-size:6.8px;transform:scaleX(0.835);transform-origin:0 0;color:#2020ff;font-weight:bold;">NirSoft Freeware.</div>
<div class="t" style="left:213.00px;top:529.94px;line-height:12px;font-size:6.8px;transform:scaleX(0.905);transform-origin:0 0;color:#2020ff;font-weight:bold;">http://www.nirsoft.net</div>
</body></html>
